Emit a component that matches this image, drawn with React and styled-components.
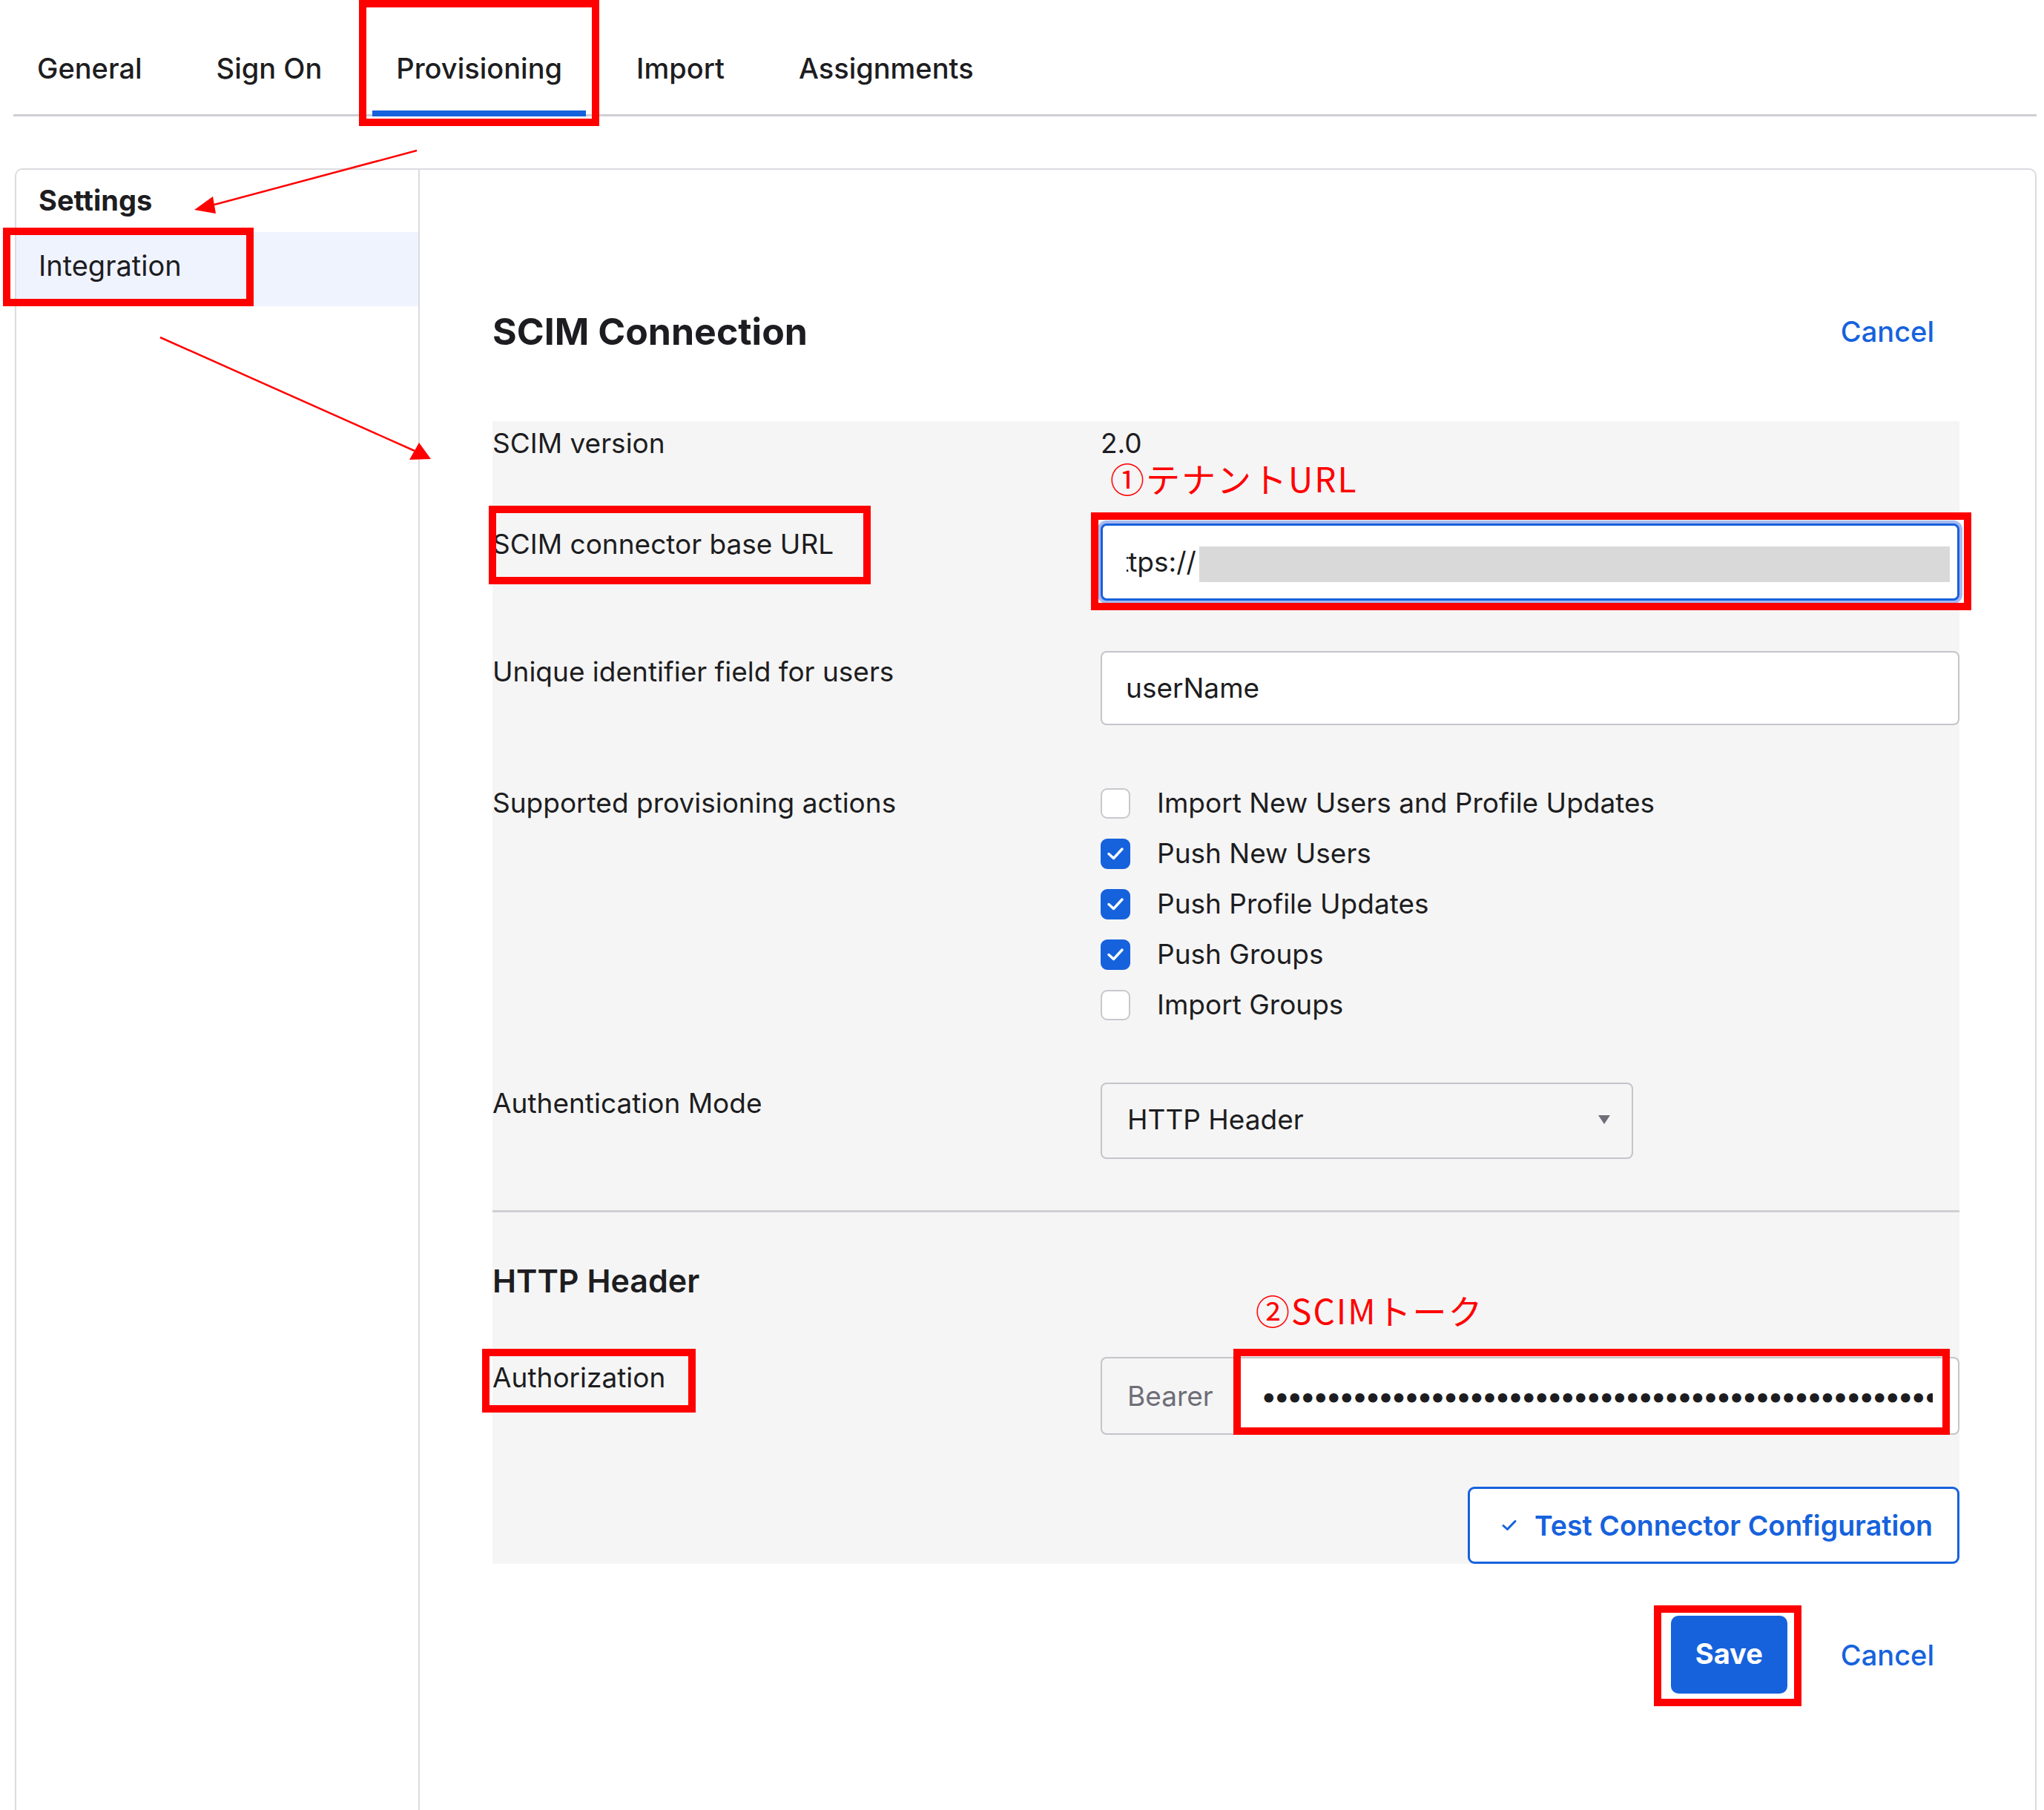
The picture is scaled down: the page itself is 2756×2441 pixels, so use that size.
import React from 'react';
import styled, { createGlobalStyle } from 'styled-components';

const GlobalStyle = createGlobalStyle`
  * { box-sizing: border-box; }
  html, body { margin: 0; padding: 0; background: #ffffff; }
  body {
    font-family: Inter, "Noto Sans", "Liberation Sans", sans-serif;
    color: #1d1d21;
  }
`;

const Page = styled.div`
  position: relative;
  min-height: 100vh;
  display: flex;
  flex-direction: column;
  padding: 0 10px 0 18px;
`;

const TabBar = styled.nav`
  display: flex;
  gap: 36px;
  border-bottom: 3px solid #cfcfd4;
`;

const Tab = styled.div`
  position: relative;
  padding: 69px 32px 34px;
  margin-bottom: -3px;
  border-bottom: 8px solid ${({ $active }) => ($active ? '#1662dd' : 'transparent')};
  font-size: 38px;
  line-height: 46px;
  font-weight: 500;
  white-space: nowrap;
`;

// red annotation frame drawn over the screenshot
const Mark = styled.span`
  position: absolute;
  top: ${({ $top }) => $top}px;
  left: ${({ $left }) => $left}px;
  ${({ $right }) => ($right !== undefined ? `right: ${$right}px;` : '')}
  ${({ $bottom }) => ($bottom !== undefined ? `bottom: ${$bottom}px;` : '')}
  ${({ $w }) => ($w !== undefined ? `width: ${$w}px;` : '')}
  ${({ $h }) => ($h !== undefined ? `height: ${$h}px;` : '')}
  border: 10px solid #ff0000;
  pointer-events: none;
  z-index: 2;
`;

const Note = styled.div`
  position: absolute;
  top: ${({ $top }) => $top}px;
  left: ${({ $left }) => $left}px;
  font-family: "Noto Sans CJK JP", "Noto Sans", sans-serif;
  font-size: 46px;
  line-height: 54px;
  letter-spacing: 2px;
  color: #ff0000;
  white-space: nowrap;
  z-index: 2;
`;

const ArrowLayer = styled.svg`
  position: absolute;
  top: 0;
  left: 0;
  pointer-events: none;
  z-index: 3;
`;

const Card = styled.div`
  flex: 1;
  margin: 70px 0 0 2px;
  display: grid;
  grid-template-columns: 544px minmax(0, 1fr);
  border: 2px solid #dcdce0;
  border-bottom: none;
  border-radius: 10px 10px 0 0;
`;

const Sidebar = styled.aside`
  border-right: 2px solid #dcdce0;
  padding-top: 18px;
`;

const SideTitle = styled.div`
  padding: 0 30px;
  margin-bottom: 20px;
  font-size: 38px;
  line-height: 46px;
  font-weight: 700;
`;

const SideItem = styled.div`
  position: relative;
  padding: 22px 30px 32px;
  background: #eff3fe;
  font-size: 38px;
  line-height: 46px;
`;

const Content = styled.main`
  min-width: 0;
  padding: 190px 102px 0 98px;
`;

const HeaderRow = styled.div`
  display: flex;
  justify-content: space-between;
  align-items: center;
`;

const Heading = styled.h2`
  margin: 0;
  font-size: 50px;
  line-height: 56px;
  font-weight: 700;
`;

const SubHeading = styled.h3`
  margin: 0 0 77px;
  font-size: 43px;
  line-height: 52px;
  font-weight: 600;
`;

const LinkButton = styled.span`
  padding: 0 34px;
  font-size: 38px;
  line-height: 46px;
  font-weight: 500;
  color: #1662dd;
`;

const Panel = styled.section`
  position: relative;
  margin-top: 93px;
  padding-top: 2px;
  background: #f5f5f5;
`;

const Row = styled.div`
  display: grid;
  grid-template-columns: 820px minmax(0, 1fr);
  margin-bottom: ${({ $gap }) => $gap}px;
`;

const Label = styled.div`
  position: relative;
  padding-top: ${({ $pad }) => $pad || 5}px;
  font-size: 37px;
  line-height: 46px;
`;

const FieldCell = styled.div`
  position: relative;
  min-width: 0;
  font-size: 37px;
  line-height: 46px;
`;

const Value = styled.div`
  padding-top: 5px;
`;

const TextInput = styled.div`
  position: relative;
  display: flex;
  align-items: center;
  height: ${({ $h }) => $h}px;
  padding: 0 32px;
  background: #ffffff;
  border: ${({ $focus }) => ($focus ? '3px solid #1662dd' : '2px solid #c4c4ca')};
  border-radius: 8px;
  box-shadow: ${({ $focus }) => ($focus ? '0 0 0 4px #a9b9ef' : 'none')};
`;

const Clip = styled.span`
  overflow: hidden;
  white-space: nowrap;
`;

const ClippedStart = styled.span`
  display: inline-block;
  margin-left: -9px;
`;

const Redaction = styled.span`
  position: absolute;
  left: 130px;
  right: 10px;
  top: 28px;
  height: 48px;
  background: #d9d9d9;
`;

const CheckList = styled.div`
  padding-top: 5px;
`;

const CheckRow = styled.div`
  display: flex;
  align-items: center;
  gap: 36px;
  height: 68px;
`;

const Box = styled.span`
  flex: none;
  display: flex;
  align-items: center;
  justify-content: center;
  width: 40px;
  height: 41px;
  border-radius: 9px;
  background: ${({ $checked }) => ($checked ? '#1662dd' : '#ffffff')};
  border: 2px solid ${({ $checked }) => ($checked ? '#1662dd' : '#c8c8ce')};
`;

const Select = styled.div`
  display: flex;
  align-items: center;
  justify-content: space-between;
  width: 718px;
  height: 103px;
  padding: 0 28px 4px 34px;
  border: 2px solid #c4c4ca;
  border-radius: 8px;
  background: #f5f5f5;
`;

const Divider = styled.hr`
  margin: 0 0 66px;
  border: none;
  height: 3px;
  background: #cfcfd4;
`;

const InputGroup = styled.div`
  display: flex;
  height: 105px;
`;

const Addon = styled.div`
  display: flex;
  align-items: center;
  flex: none;
  width: 182px;
  padding-left: 34px;
  border: 2px solid #c4c4ca;
  border-radius: 8px 0 0 8px;
  background: #f5f5f5;
  color: #6e6e78;
`;

const Secret = styled.div`
  position: relative;
  flex: 1;
  min-width: 0;
  display: flex;
  align-items: center;
  padding: 0 34px 0 36px;
  background: #ffffff;
  border: 2px solid #c4c4ca;
  border-left: none;
  border-radius: 0 8px 8px 0;
`;

const Dots = styled.span`
  overflow: hidden;
  white-space: nowrap;
  font-size: 40px;
  font-weight: 800;
  color: #1d1d21;
`;

const ActionRow = styled.div`
  display: flex;
  justify-content: flex-end;
  align-items: center;
  gap: ${({ $gap }) => $gap || 0}px;
  margin-top: ${({ $top }) => $top || 0}px;
`;

const OutlineButton = styled.button`
  display: flex;
  align-items: center;
  gap: 24px;
  height: 104px;
  padding: 0 33px 0 43px;
  background: #ffffff;
  border: 3px solid #1662dd;
  border-radius: 9px;
  font-family: inherit;
  font-size: 37.5px;
  font-weight: 600;
  color: #1662dd;
`;

const PrimaryButton = styled.button`
  position: relative;
  height: 105px;
  padding: 0 33px 4px;
  background: #1662dd;
  border: none;
  border-radius: 10px;
  font-family: inherit;
  font-size: 38px;
  font-weight: 700;
  color: #ffffff;
`;

const actions = [
  { label: 'Import New Users and Profile Updates', checked: false },
  { label: 'Push New Users', checked: true },
  { label: 'Push Profile Updates', checked: true },
  { label: 'Push Groups', checked: true },
  { label: 'Import Groups', checked: false },
];

const tabs = ['General', 'Sign On', 'Provisioning', 'Import', 'Assignments'];

function Check() {
  return (
    <svg width="24" height="20" viewBox="0 0 24 20">
      <path d="M3 10.5 L9.5 16.5 L21 4" fill="none" stroke="#ffffff" strokeWidth="3.4" strokeLinecap="round" strokeLinejoin="round" />
    </svg>
  );
}

export default function App() {
  return (
    <>
      <GlobalStyle />
      <Page>
        <ArrowLayer width="2756" height="700" viewBox="0 0 2756 700">
          <line x1="562" y1="203" x2="289" y2="276" stroke="#ff0000" strokeWidth="2.5" />
          <polygon points="262,283 287,265 291,288" fill="#ff0000" />
          <line x1="216" y1="455" x2="559" y2="608" stroke="#ff0000" strokeWidth="2.5" />
          <polygon points="581,619 552,620 565,597" fill="#ff0000" />
        </ArrowLayer>

        <TabBar>
          {tabs.map((t) => (
            <Tab key={t} $active={t === 'Provisioning'}>
              {t}
              {t === 'Provisioning' && <Mark $top={0} $left={-18} $right={-18} $bottom={-21} />}
            </Tab>
          ))}
        </TabBar>

        <Card>
          <Sidebar>
            <SideTitle>Settings</SideTitle>
            <SideItem>
              Integration
              <Mark $top={-6} $left={-18} $w={338} $h={106} />
            </SideItem>
          </Sidebar>

          <Content>
            <HeaderRow>
              <Heading>SCIM Connection</Heading>
              <LinkButton>Cancel</LinkButton>
            </HeaderRow>

            <Panel>
              <Note $top={49} $left={833}>①テナントURL</Note>
              <Note $top={1171} $left={1029}>②SCIMトーク</Note>

              <Row $gap={85}>
                <Label>SCIM version</Label>
                <FieldCell>
                  <Value>2.0</Value>
                </FieldCell>
              </Row>

              <Row $gap={68}>
                <Label>
                  SCIM connector base URL
                  <Mark $top={-24} $left={-5} $w={515} $h={106} />
                </Label>
                <FieldCell>
                  <TextInput $h={104} $focus>
                    <Clip>
                      <ClippedStart>ttps://</ClippedStart>
                    </Clip>
                    <Redaction />
                  </TextInput>
                  <Mark $top={-15} $left={-13} $right={-16} $bottom={-13} />
                </FieldCell>
              </Row>

              <Row $gap={66}>
                <Label>Unique identifier field for users</Label>
                <FieldCell>
                  <TextInput $h={100}>userName</TextInput>
                </FieldCell>
              </Row>

              <Row $gap={71}>
                <Label $pad={16}>Supported provisioning actions</Label>
                <FieldCell>
                  <CheckList>
                    {actions.map((a) => (
                      <CheckRow key={a.label}>
                        <Box $checked={a.checked}>{a.checked && <Check />}</Box>
                        {a.label}
                      </CheckRow>
                    ))}
                  </CheckList>
                </FieldCell>
              </Row>

              <Row $gap={69}>
                <Label>Authentication Mode</Label>
                <FieldCell>
                  <Select>
                    HTTP Header
                    <svg width="18" height="14" viewBox="0 0 18 14">
                      <path d="M1 1 H17 L9 13 Z" fill="#6e6e78" />
                    </svg>
                  </Select>
                </FieldCell>
              </Row>

              <Divider />

              <SubHeading>HTTP Header</SubHeading>

              <Row $gap={70}>
                <Label>
                  Authorization
                  <Mark $top={-11} $left={-14} $w={288} $h={86} />
                </Label>
                <FieldCell>
                  <InputGroup>
                    <Addon>Bearer</Addon>
                    <Secret>
                      <Dots>{'•'.repeat(64)}</Dots>
                      <Mark $top={-13} $left={-3} $w={966} $h={116} />
                    </Secret>
                  </InputGroup>
                </FieldCell>
              </Row>

              <ActionRow>
                <OutlineButton>
                  <svg width="20" height="16" viewBox="0 0 20 16">
                    <path d="M2 8.5 L7.5 13.5 L18 2.5" fill="none" stroke="#1662dd" strokeWidth="3" strokeLinecap="round" strokeLinejoin="round" />
                  </svg>
                  Test Connector Configuration
                </OutlineButton>
              </ActionRow>
            </Panel>

            <ActionRow $top={70} $gap={38}>
              <PrimaryButton>
                Save
                <Mark $top={-14} $left={-23} $right={-19} $bottom={-17} />
              </PrimaryButton>
              <LinkButton>Cancel</LinkButton>
            </ActionRow>
          </Content>
        </Card>
      </Page>
    </>
  );
}
